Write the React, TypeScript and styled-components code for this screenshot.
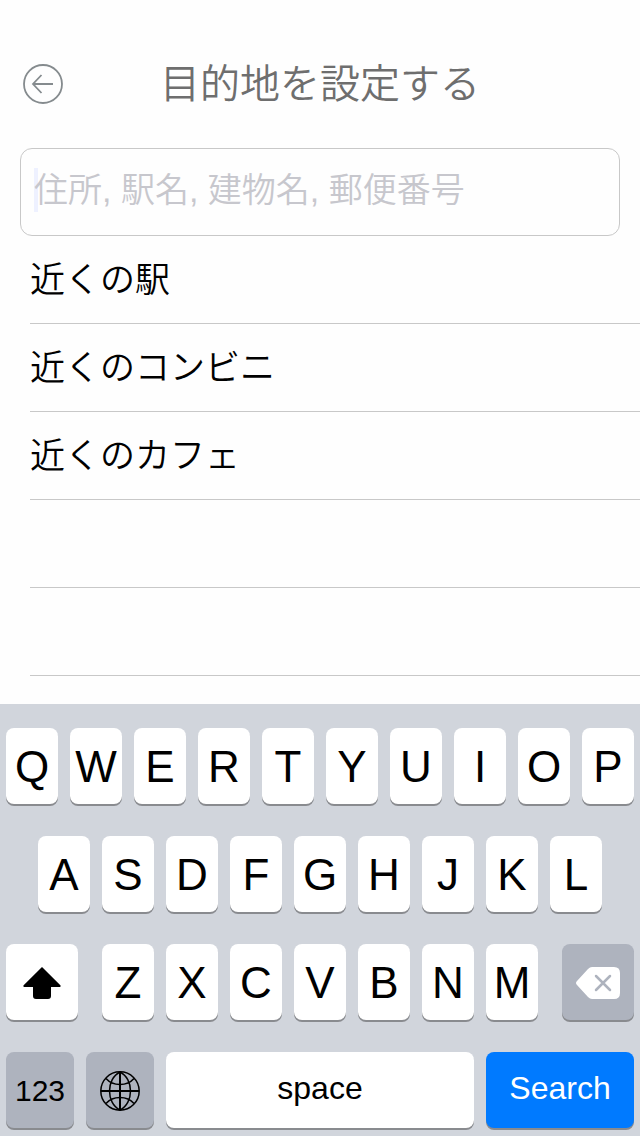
import React from "react";
import styled, { createGlobalStyle } from "styled-components";

const GlobalStyle = createGlobalStyle`
  *, *::before, *::after { box-sizing: border-box; }
  body {
    margin: 0;
    background: #fefefe;
    color: #000;
    font-family: "Liberation Sans", "Noto Sans CJK JP", sans-serif;
    font-weight: 350;
  }
  button, input { font: inherit; color: inherit; }
`;

const Screen = styled.div`
  display: flex;
  flex-direction: column;
  min-height: 100vh;
`;

const Header = styled.header`
  display: grid;
  grid-template-columns: 40px 1fr 40px;
  align-items: center;
  padding: 56px 23px 36px;
`;

const BackButton = styled.button`
  display: block;
  width: 40px;
  height: 40px;
  padding: 0;
  border: 0;
  background: none;
  svg { display: block; }
`;

const Title = styled.h1`
  margin: 0;
  font-size: 40px;
  line-height: 56px;
  font-weight: 350;
  text-align: center;
  color: #6e6e6e;
`;

const SearchField = styled.label`
  position: relative;
  display: block;
  margin: 0 20px;
`;

const SearchInput = styled.input`
  display: block;
  width: 100%;
  height: 88px;
  padding: 0 13px 4px;
  border: 1px solid #c8c8c8;
  border-radius: 12px;
  outline: none;
  background: transparent;
  font-size: 34px;
  &::placeholder { color: #c7c7cd; opacity: 1; }
`;

const Caret = styled.span`
  position: absolute;
  z-index: -1;
  left: 14px;
  top: 20px;
  width: 4px;
  height: 44px;
  background: #eef1ff;
`;

const List = styled.ul`
  flex: 1;
  margin: 0;
  padding: 0 0 28px 30px;
  list-style: none;
`;

const Row = styled.li`
  height: 88px;
  border-bottom: 1px solid #c8c8c8;
`;

const RowLink = styled.a`
  display: block;
  font-size: 35px;
  line-height: 87px;
  color: #000;
  text-decoration: none;
`;

const Keyboard = styled.section`
  display: flex;
  flex-direction: column;
  gap: 32px;
  padding: 24px 6px 8px;
  background: #d1d5dc;
`;

const KeyRow = styled.div<{ $columns: string; $inset?: boolean }>`
  display: grid;
  grid-template-columns: ${(p) => p.$columns};
  column-gap: 12px;
  padding: 0 ${(p) => (p.$inset ? "calc((100% + 12px) / 20)" : "0")};
`;

const LetterGroup = styled.div`
  display: grid;
  grid-template-columns: repeat(7, 1fr);
  gap: 12px;
  padding: 0 12px;
`;

type Tone = "light" | "dark" | "blue";
const toneColor = { light: "#fff", dark: "#aeb3be", blue: "#007aff" };

const Key = styled.button<{ $tone?: Tone; $word?: boolean }>`
  display: flex;
  align-items: center;
  justify-content: center;
  min-width: 0;
  height: 76px;
  padding: ${(p) => (p.$word ? "0 0 4px" : "2px 0 0")};
  border: 0;
  border-radius: 8px;
  box-shadow: 0 2px 0 #898b8f;
  background: ${(p) => toneColor[p.$tone ?? "light"]};
  color: ${(p) => (p.$tone === "blue" ? "#fff" : "#000")};
  font-size: ${(p) => (p.$word ? "32px" : "44px")};
`;

const NumberKey = styled(Key)`
  font-size: 30px;
`;

const BackIcon = () => (
  <svg width="40" height="40" viewBox="0 0 40 40" fill="none" stroke="#858b8e" strokeWidth="1.800" aria-hidden="true">
    <circle cx="20" cy="20" r="19" />
    <path d="M30 20H10M18.500 11L10 20l8.500 9" />
  </svg>
);

const ShiftIcon = () => (
  <svg width="38" height="32" viewBox="0 0 38 32" aria-hidden="true">
    <path d="M19 0L37.600 18.400Q38 20 36.500 20H28v9q0 3-3 3H13q-3 0-3-3v-9H1.500Q0 20 .400 18.400Z" />
  </svg>
);

const DeleteIcon = () => (
  <svg width="44" height="32" viewBox="0 0 44 32" aria-hidden="true">
    <path d="M16 0H38q6 0 6 6v20q0 6-6 6H16q-2 0-4-2L1 18q-2-2 0-4L12 2q2-2 4-2Z" fill="#fff" />
    <path d="M20 9L34 23M34 9L20 23" stroke="#aeb3be" strokeWidth="2.500" strokeLinecap="round" />
  </svg>
);

const GlobeIcon = () => (
  <svg width="40" height="40" viewBox="0 0 40 40" fill="none" stroke="#000" strokeWidth="1.500" aria-hidden="true">
    <circle cx="20" cy="20" r="19.200" />
    <path d="M20 1V39M1 20H39" strokeWidth="2" />
    <path d="M20 1C6 8 6 32 20 39M20 1C34 8 34 32 20 39M6 7.500C13 15.500 27 15.500 34 7.500M6 32.500C13 24.500 27 24.500 34 32.500" />
  </svg>
);

const letters = (text: string) =>
  text.split("").map((letter) => (
    <Key key={letter} type="button">{letter}</Key>
  ));

const suggestions = ["近くの駅", "近くのコンビニ", "近くのカフェ", "", ""];

export default function App() {
  return (
    <Screen>
      <GlobalStyle />
      <Header>
        <BackButton type="button" aria-label="戻る"><BackIcon /></BackButton>
        <Title>目的地を設定する</Title>
      </Header>
      <SearchField>
        <Caret />
        <SearchInput type="text" aria-label="目的地" placeholder="住所, 駅名, 建物名, 郵便番号" />
      </SearchField>
      <List>
        {suggestions.map((label, i) => (
          <Row key={i}>{label && <RowLink href="#">{label}</RowLink>}</Row>
        ))}
      </List>
      <Keyboard>
        <KeyRow $columns="repeat(10, 1fr)">{letters("QWERTYUIOP")}</KeyRow>
        <KeyRow $columns="repeat(9, 1fr)" $inset>{letters("ASDFGHJKL")}</KeyRow>
        <KeyRow $columns="72fr 460fr 72fr">
          <Key type="button" aria-label="Shift"><ShiftIcon /></Key>
          <LetterGroup>{letters("ZXCVBNM")}</LetterGroup>
          <Key type="button" $tone="dark" aria-label="Delete"><DeleteIcon /></Key>
        </KeyRow>
        <KeyRow $columns="68fr 68fr 308fr 148fr">
          <NumberKey type="button" $tone="dark">123</NumberKey>
          <Key type="button" $tone="dark" aria-label="Next keyboard"><GlobeIcon /></Key>
          <Key type="button" $word>space</Key>
          <Key type="button" $tone="blue" $word>Search</Key>
        </KeyRow>
      </Keyboard>
    </Screen>
  );
}
